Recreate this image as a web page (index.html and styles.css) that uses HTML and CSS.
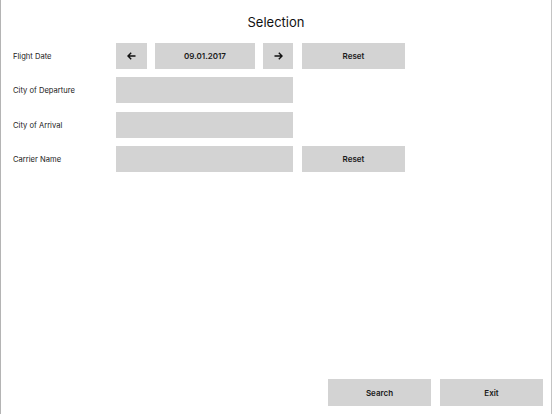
FILE: index.html
```html
<!DOCTYPE html>
<html>
<head>
<meta charset="utf-8">
<link rel="stylesheet" href="styles.css">
</head>
<body>
<div class="screen">
  <h1 class="title">Selection</h1>
  <div class="form">
    <div class="row">
      <div class="label">Flight Date</div>
      <div class="btn arrow-btn left">
        <svg width="9" height="8" viewBox="0 0 9 8"><path d="M8.5 4H1.2M4.2 0.8L1 4l3.2 3.2" fill="none" stroke="#111" stroke-width="1.4"/></svg>
      </div>
      <div class="btn date">09.01.2017</div>
      <div class="btn arrow-btn right">
        <svg width="9" height="8" viewBox="0 0 9 8"><path d="M0.5 4h7.3M4.8 0.8L8 4 4.8 7.2" fill="none" stroke="#111" stroke-width="1.4"/></svg>
      </div>
      <div class="btn reset">Reset</div>
    </div>
    <div class="row">
      <div class="label">City of Departure</div>
      <div class="field"></div>
    </div>
    <div class="row">
      <div class="label">City of Arrival</div>
      <div class="field"></div>
    </div>
    <div class="row">
      <div class="label">Carrier Name</div>
      <div class="field"></div>
      <div class="btn reset">Reset</div>
    </div>
  </div>
  <div class="footer">
    <div class="btn big">Search</div>
    <div class="btn big">Exit</div>
  </div>
</div>
</body>
</html>
```
FILE: styles.css
```css
html, body {
  margin: 0;
  padding: 0;
  background: #fff;
}
.screen {
  box-sizing: border-box;
  width: 552px;
  height: 414px;
  border-left: 1px solid #b4b4b4;
  border-right: 1px solid #c4c4c4;
  display: flex;
  flex-direction: column;
  font-family: Inter, "Liberation Sans", sans-serif;
  color: #111;
}
.title {
  margin: 0;
  padding-top: 14px;
  height: 30px;
  box-sizing: border-box;
  font-size: 13px;
  font-weight: 400;
  line-height: 16px;
  text-align: center;
}
.form {
  margin-top: 13px;
  display: flex;
  flex-direction: column;
  row-gap: 8.33px;
}
.row {
  display: flex;
  align-items: center;
  height: 26px;
}
.label {
  width: 103px;
  padding-left: 12px;
  padding-top: 1px;
  font-size: 7.6px;
  color: #222;
}
.btn {
  background: #d3d3d3;
  height: 26px;
  display: flex;
  align-items: center;
  justify-content: center;
  font-size: 8px;
  font-weight: 600;
  color: #1a1a1a;
}
.arrow-btn.left {
  width: 31px;
  margin-right: 8px;
}
.date {
  width: 100px;
  margin-right: 8px;
}
.arrow-btn.right {
  width: 30px;
  margin-right: 9px;
}
.reset {
  width: 103px;
}
.field {
  width: 177px;
  height: 26px;
  background: #d3d3d3;
  margin-right: 9px;
}
.footer {
  margin-top: auto;
  display: flex;
  justify-content: flex-end;
  gap: 9px;
  padding: 0 8px 8px 0;
}
.btn.big {
  width: 103px;
  height: 27px;
}
```
